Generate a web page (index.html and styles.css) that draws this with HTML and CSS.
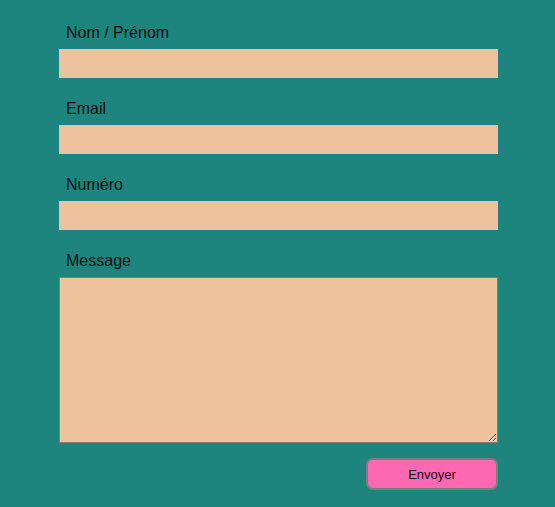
FILE: index.html
```html
<!DOCTYPE html>
<html lang="fr">
<head>
<meta charset="utf-8">
<link rel="stylesheet" href="styles.css">
</head>
<body>
<form class="form">
  <label class="label" for="nom">Nom / Prénom</label>
  <input class="field" id="nom" type="text">
  <label class="label" for="email">Email</label>
  <input class="field" id="email" type="email">
  <label class="label" for="num">Numéro</label>
  <input class="field" id="num" type="tel">
  <label class="label" for="msg">Message</label>
  <textarea class="area" id="msg"></textarea>
  <div class="actions">
    <button class="send" type="button">Envoyer</button>
  </div>
</form>
</body>
</html>
```
FILE: styles.css
```css
html, body {
  margin: 0;
  height: 100%;
  background: #1e847e;
}
body {
  font-family: "Liberation Sans", Arial, sans-serif;
}
.form {
  width: 439px;
  margin-left: 59px;
  padding-top: 24px;
  display: flex;
  flex-direction: column;
}
.label {
  display: block;
  padding: 0 7px;
  font-size: 16px;
  line-height: 18px;
  color: #111;
  margin-bottom: 7px;
}
.field {
  display: block;
  box-sizing: border-box;
  width: 439px;
  height: 29px;
  margin: 0 0 22px 0;
  border: none;
  background: #edc29d;
  padding: 0 6px;
  font: 14px "Liberation Sans", Arial, sans-serif;
}
.area {
  display: block;
  box-sizing: border-box;
  width: 439px;
  height: 166px;
  margin: 0;
  border: 1px solid #8a7a68;
  background: #edc29d;
  font: 14px "Liberation Sans", Arial, sans-serif;
}
.actions {
  display: flex;
  justify-content: flex-end;
  margin-top: 15px;
}
.send {
  box-sizing: border-box;
  width: 132px;
  height: 32px;
  background: #ff69b4;
  border: 2px solid #7a7f7e;
  border-radius: 7px;
  font: 13px "Liberation Sans", Arial, sans-serif;
  color: #111;
  padding: 0;
}
```
